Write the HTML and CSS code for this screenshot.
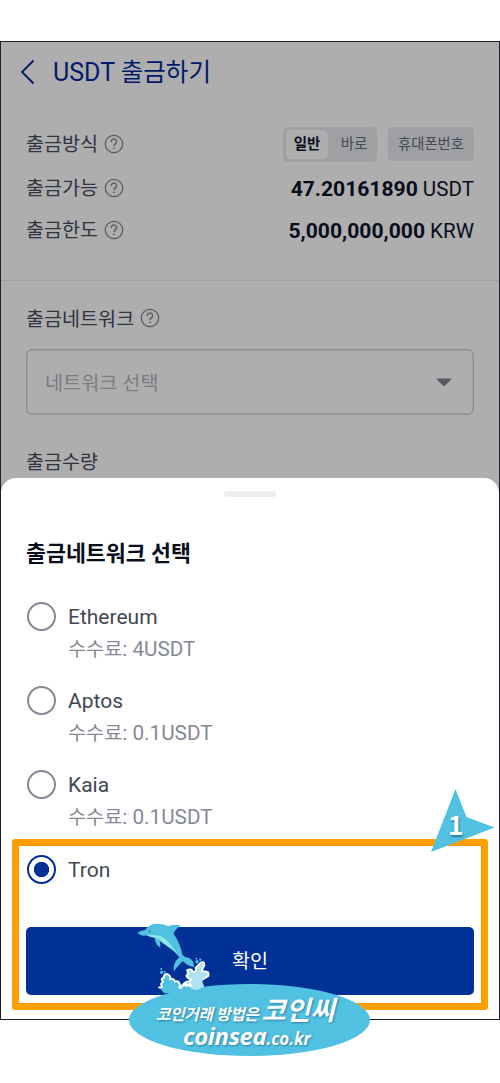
FILE: index.html
```html
<!DOCTYPE html>
<html lang="ko">
<head>
<meta charset="utf-8">
<title>USDT 출금하기</title>
<link rel="stylesheet" href="styles.css">
</head>
<body>
<div class="phone">
  <header class="header">
    <svg class="back" width="16" height="26" viewBox="0 0 16 26"><path d="M14.500 1.500 3 13l11.500 11.500" fill="none" stroke="#001a6b" stroke-width="1.8"/></svg>
    <h1 class="title">USDT <span class="title-ko">출금하기</span></h1>
  </header>
  <section class="summary">
    <div class="row row-method">
      <span class="label">출금방식</span><svg class="help" viewBox="0 0 20 20"><use href="#help"/></svg>
      <div class="tabs"><span class="tab tab-active">일반</span><span class="tab">바로</span></div>
      <span class="chip">휴대폰번호</span>
    </div>
    <div class="row row-available">
      <span class="label">출금가능</span><svg class="help" viewBox="0 0 20 20"><use href="#help"/></svg>
      <span class="amount"><b>47.20161890</b> USDT</span>
    </div>
    <div class="row row-limit">
      <span class="label">출금한도</span><svg class="help" viewBox="0 0 20 20"><use href="#help"/></svg>
      <span class="amount"><b>5,000,000,000</b> KRW</span>
    </div>
  </section>
  <section class="form">
    <div class="row row-network"><span class="label">출금네트워크</span><svg class="help" viewBox="0 0 20 20"><use href="#help"/></svg></div>
    <div class="select"><span class="placeholder">네트워크 선택</span><svg width="16" height="9" viewBox="0 0 16 9"><path d="M1 .5h14q.8.3 0 1.200L8.800 7.800q-.8.8-1.600 0L1 1.700Q.2.8 1 .5z" fill="#565a63"/></svg></div>
    <div class="row row-quantity"><span class="label">출금수량</span></div>
  </section>
  <section class="sheet">
    <div class="handle"></div>
    <h2 class="sheet-title">출금네트워크 선택</h2>
    <div class="options">
      <div class="option"><i class="radio"></i><div><div class="name">Ethereum</div><div class="fee"><span class="fee-ko">수수료</span>: 4USDT</div></div></div>
      <div class="option"><i class="radio"></i><div><div class="name">Aptos</div><div class="fee"><span class="fee-ko">수수료</span>: 0.1USDT</div></div></div>
      <div class="option"><i class="radio"></i><div><div class="name">Kaia</div><div class="fee"><span class="fee-ko">수수료</span>: 0.1USDT</div></div></div>
      <div class="option"><i class="radio radio-on"></i><div><div class="name">Tron</div></div></div>
    </div>
    <div class="confirm">확인</div>
  </section>
</div>

<div class="highlight"></div>
<div class="pointer">
  <svg width="66" height="66" viewBox="0 0 66 66"><path d="M25.500 0 36.500 28 64.500 38.500 1 63z" fill="#51c1e1"/></svg>
  <span class="pointer-number">1</span>
</div>
<div class="banner">
  <div class="banner-top"><span class="banner-lead">코인거래 방법은</span><span class="banner-brand">코인씨</span></div>
  <div class="banner-url"><span class="banner-domain">coinsea</span><span class="banner-tld">.co.kr</span></div>
</div>
<svg class="dolphin" width="110" height="90" viewBox="0 0 330 270">
  <g transform="translate(45 24)">
    <path d="M88 226 72 208 82 205 76 196 84 190 78 181 87 179 86 171 97 168 107 178 106 184 115 182 120 190 131 188 135 202 150 192 166 190 180 212 170 226z" fill="#51c1e1"/>
    <path d="M160 190 168 184 154 174 157 156 168 153 175 163 184 157 182 148 204 132 209 142 202 160 221 162 220 174 206 183 202 192 208 206 186 216 170 214z" fill="#aee2f1"/>
    <path d="M72 208 Q80 210 81 205 Q74 198 84 191 Q74 181 87 180 Q83 170 97 168 Q110 175 105 184 Q117 179 120 191 Q132 185 135 202 Q134 208 144 204 Q145 195 156 191 Q166 191 170 185 Q158 183 154 173 Q163 166 156 157 Q169 149 174 162 Q185 163 182 149 Q189 143 195 136 Q209 126 208 142 Q202 150 201 161 Q225 156 220 174 L206 183" fill="none" stroke="#fff" stroke-width="5.500" stroke-linejoin="round" stroke-linecap="round"/>
    <path d="M133 202 143 208 137 214 129 209zM150 192 160 199 157 208 146 203zM163 191 172 202 166 209 158 202z" fill="#fff"/>
    <circle cx="80" cy="163" r="5" fill="#51c1e1"/><circle cx="89" cy="162" r="3" fill="#51c1e1"/><circle cx="79" cy="153" r="3" fill="#51c1e1"/>
    <circle cx="186" cy="131" r="5" fill="#51c1e1"/><circle cx="196" cy="125" r="3.500" fill="#51c1e1"/><circle cx="184" cy="122" r="2.500" fill="#51c1e1"/>
  </g>
  <path d="M52 69Q65 60 76 60 86 44 105 42 127 39 145 49 162 42 183 46 164 58 161 72 181 100 187 134 Q194 143 207 144 Q220 149 223 170 Q205 171 189 154 Q180 160 162 183 Q156 162 178 142 Q163 123 145 112 Q130 101 119 94 Q122 104 121 113 Q106 104 104 83 Q85 77 80 76 Q65 80 52 69z" fill="#51c1e1"/>
  <path d="M78 76Q98 74 122 78 147 91 178 140 160 117 146 110 128 98 120 89L108 84Q92 83 78 76z" fill="#8ee8e5"/>
  <circle cx="89" cy="64" r="2.800" fill="#245a68"/>
</svg>

<svg class="defs">
  <symbol id="help" viewBox="0 0 20 20">
    <circle cx="10" cy="10" r="8.700" fill="none" stroke="#595c65" stroke-width="1.250"/>
    <path d="M7.300 8V7.500a2.650 2.650 0 1 1 4.500 1.900Q10 10.800 10 12.100" fill="none" stroke="#595c65" stroke-width="1.400"/>
    <circle cx="10" cy="14.300" r=".9" fill="#595c65"/>
  </symbol>
</svg>
</body>
</html>
```
FILE: styles.css
```css
* { box-sizing: border-box; }
body {
  margin: 0;
  width: 500px;
  height: 1083px;
  padding-top: 41px;
  position: relative;
  overflow: hidden;
  background: #fff;
  font-family: Roboto, "Noto Sans CJK KR", sans-serif;
  font-size: 20.5px;
  color: #30343f;
}
.defs { position: absolute; width: 0; height: 0; }
.phone {
  height: 979px;
  border: 1px solid #1b202c;
  background: #aeaeae;
  display: flex;
  flex-direction: column;
}
.header { display: flex; align-items: center; height: 60px; padding-left: 18px; gap: 18px; }
.title { margin: 0; padding-top: 1px; font-size: 25px; font-weight: 400; line-height: 30px; color: #001a6b; white-space: nowrap; }
.title-ko { font-size: 24.500px; }
.summary { height: 179px; padding: 19px 25px 0; border-bottom: 1px solid #9f9fa1; }
.row { display: flex; align-items: center; white-space: nowrap; }
.row-method { height: 46px; }
.row-available { height: 42px; }
.row-limit { height: 42px; }
.label { padding-top: 2px; font-size: 19.6px; line-height: 28px; }
.help { width: 20px; height: 20px; margin-left: 6px; flex: none; }
.tabs { display: flex; margin-left: auto; padding: 3px; width: 94px; height: 35px; border-radius: 5px; background: #9fa0a3; }
.tab { flex: 1; text-align: center; font-size: 14.5px; line-height: 30px; color: #454954; padding-left: 6px; }
.tab-active { flex: none; width: 42px; padding: 0; border-radius: 5px; background: #aeaeae; color: #080d1c; font-weight: 700; }
.chip { margin-left: 11px; width: 86px; height: 34px; border-radius: 5px; background: #9fa0a3; text-align: center; font-size: 14.3px; line-height: 35px; color: #454954; }
.amount { margin-left: auto; color: #080d1c; font-size: 20.6px; }
.amount b { font-size: 21.1px; font-weight: 700; }
.form { padding: 20px 25px 0; height: 197px; }
.row-network { height: 35px; }
.row-network .help { margin-top: -1px; }
.select {
  margin-top: 13px;
  height: 66px;
  border: 1px solid #909092;
  box-shadow: inset 0 0 0 .5px #909092;
  border-radius: 6px;
  display: flex;
  align-items: center;
  justify-content: space-between;
  padding: 0 21px 0 18px;
}
.placeholder { margin-top: -2px; font-size: 19.7px; color: #7b7d83; }
.row-quantity { margin-top: 31px; height: 32px; }
.sheet { flex: 1; background: #fff; border-radius: 15px 15px 0 0; padding: 13px 25px 0; }
.handle { width: 52px; height: 6px; border-radius: 3px; background: #ebecf0; margin: 0 auto; }
.sheet-title { margin: 42px 0 0; font-size: 21.700px; font-weight: 700; line-height: 30px; color: #080d1c; white-space: nowrap; }
.options { margin-top: 31px; height: 326px; }
.option { display: flex; height: 84.200px; padding-left: 1px; gap: 12px; white-space: nowrap; }
.radio { width: 29px; height: 29px; margin-top: 2px; border: 2px solid #858994; border-radius: 50%; }
.radio-on { border-color: #002d95; background: radial-gradient(circle, #003197 7.300px, #fff 8px); }
.name { font-size: 21px; line-height: 34px; height: 32px; color: #424753; }
.fee { font-size: 20.7px; line-height: 34px; color: #858994; }
.fee-ko { font-size: 19.7px; }
.confirm { height: 68px; margin-top: 1px; border-radius: 5px; background: #003197; color: #fff; text-align: center; font-size: 19.6px; line-height: 69px; }
.highlight { position: absolute; left: 12px; top: 839px; width: 476px; height: 171px; border: 6px solid #ff9f00; border-radius: 3px; box-shadow: inset 0 0 0 1px #ff9000; }
.pointer { position: absolute; left: 430px; top: 789px; width: 66px; height: 66px; }
.pointer-number { position: absolute; left: 18px; top: 19px; font: 700 26px/32px "Noto Sans CJK KR", sans-serif; color: #fff; text-shadow: 1px 2px 2px #2b7897; }
.banner {
  position: absolute;
  left: 129px;
  top: 984px;
  width: 241px;
  height: 72px;
  padding: 14px 0 0 27px;
  border-radius: 50%;
  background: #51c1e1;
  color: #fff;
  font-style: italic;
  font-weight: 700;
  white-space: nowrap;
  text-shadow: 1px 1px 2px #2b7fa0;
}
.banner-top { display: flex; align-items: baseline; height: 27px; line-height: 28px; gap: 3px; }
.banner-lead { font-size: 15.700px; font-weight: 700; letter-spacing: -0.3px; }
.banner-brand { font-size: 26.500px; line-height: 26px; font-weight: 700; }
.banner-url { display: flex; align-items: baseline; padding-left: 27px; line-height: 22px; font-family: "Open Sans", sans-serif; font-weight: 700; }
.banner-domain { font-size: 24px; letter-spacing: -0.4px; }
.banner-tld { font-size: 17px; letter-spacing: -0.1px; }
.dolphin { position: absolute; left: 120px; top: 910px; }
```
